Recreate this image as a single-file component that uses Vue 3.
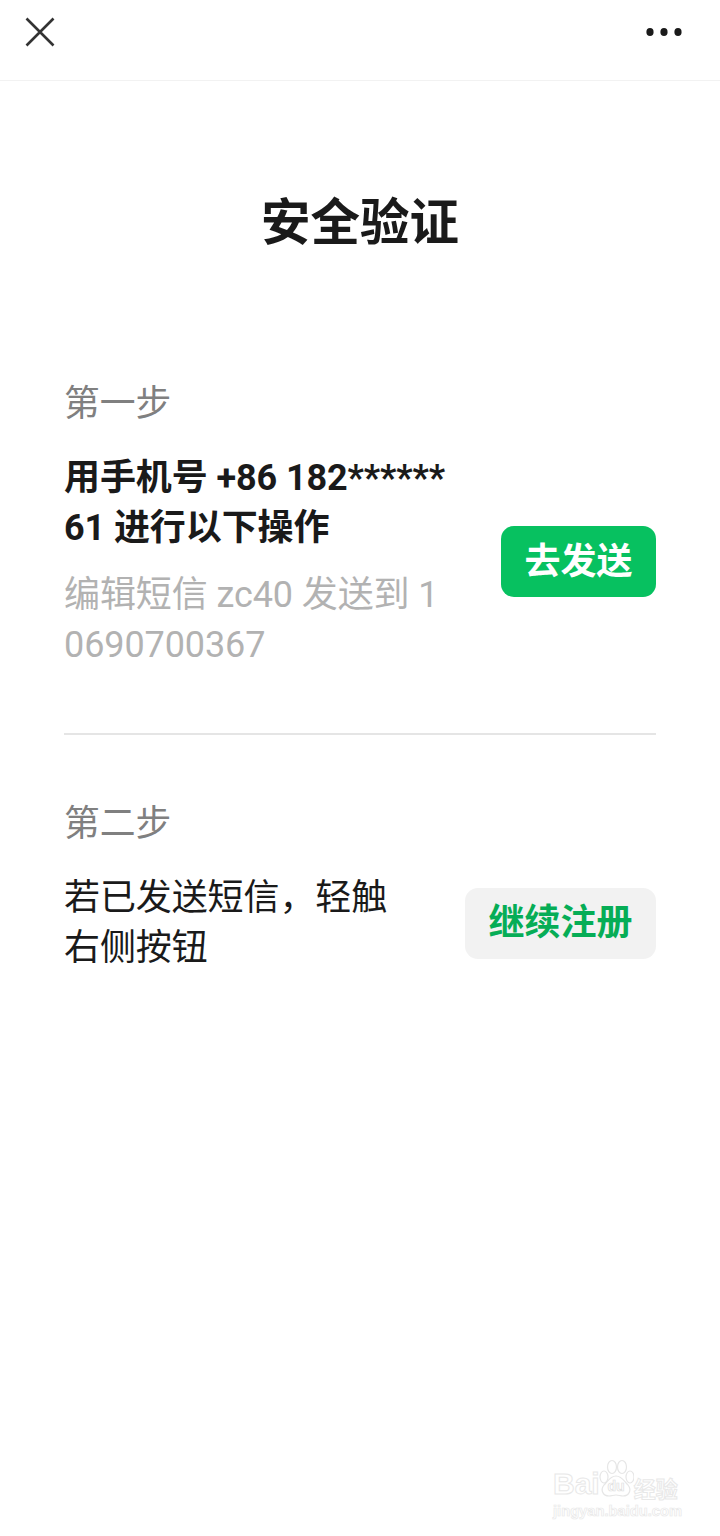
<script setup>
const steps = [
  { label: '第一步', title: '用手机号 +86 182******61 进行以下操作', strong: true, desc: '编辑短信 zc40 发送到 10690700367', action: '去发送', primary: true },
  { label: '第二步', title: '若已发送短信\uFF0C轻触右侧按钮', strong: false, desc: '', action: '继续注册', primary: false },
]
</script>

<template>
  <div class="page">
    <header class="nav">
      <svg class="close" width="30" height="30" viewBox="0 0 30 30" aria-label="关闭">
        <path d="M1.5 1.5 28.5 28.5M28.5 1.5 1.5 28.5" stroke="#333" stroke-width="2.6" fill="none" />
      </svg>
      <svg class="more" width="36" height="10" viewBox="0 0 36 10" aria-label="更多">
        <ellipse cx="4" cy="5" rx="3.6" ry="4" fill="#1a1a1a" />
        <ellipse cx="18" cy="5" rx="3.6" ry="4" fill="#1a1a1a" />
        <ellipse cx="32" cy="5" rx="3.6" ry="4" fill="#1a1a1a" />
      </svg>
    </header>
    <main class="content">
      <h1 class="title">安全验证</h1>
      <section v-for="(s, i) in steps" :key="s.label" class="step" :class="{ last: i === steps.length - 1 }">
        <div class="label">{{ s.label }}</div>
        <div class="row">
          <div class="text">
            <div class="main" :class="{ strong: s.strong }">{{ s.title }}</div>
            <div v-if="s.desc" class="desc">{{ s.desc }}</div>
          </div>
          <button class="btn" :class="s.primary ? 'primary' : 'secondary'">{{ s.action }}</button>
        </div>
      </section>
    </main>
    <div class="watermark">
      <div class="wm-top">
        <span class="wm-brand">Bai</span>
        <svg class="paw" width="36" height="46" viewBox="0 0 36 46">
          <g fill="#fff" stroke="#e6e6e6" stroke-width="1.2">
            <ellipse cx="6" cy="19" rx="4" ry="6" />
            <ellipse cx="14" cy="9" rx="4.5" ry="6.5" />
            <ellipse cx="24" cy="9" rx="4.5" ry="6.5" />
            <ellipse cx="32" cy="19" rx="4" ry="6" />
            <path d="M18 18c6 0 8 5 12 9 4 5 1 11-5 11-3 0-4-1-7-1s-4 1-7 1c-6 0-9-6-5-11 4-4 6-9 12-9z" />
          </g>
          <text x="18" y="33" text-anchor="middle" class="paw-text">du</text>
        </svg>
        <span class="wm-cn">经验</span>
      </div>
      <div class="wm-url">jingyan.baidu.com</div>
    </div>
  </div>
</template>

<style scoped>
.page {
  position: relative;
  width: 720px;
  height: 1536px;
  background: #fff;
  overflow: hidden;
  font-family: Roboto, "Noto Sans CJK SC", sans-serif;
  color: #1a1a1a;
}
.nav {
  height: 81px;
  box-sizing: border-box;
  border-bottom: 1px solid #f2f2f2;
  padding: 0 38px 0 25px;
  display: flex;
  align-items: center;
  justify-content: space-between;
}
.close { margin-top: -16px; }
.more { margin-top: -17px; }
.content {
  padding: 0 64px;
  display: flex;
  flex-direction: column;
}
.title {
  margin: 106px 0 0;
  text-align: center;
  font-size: 49.5px;
  line-height: 72px;
  font-weight: 700;
}
.step { padding: 0 0 63px; border-bottom: 2px solid #e5e5e5; }
.step.last { border-bottom: 0; padding: 0; margin-top: 64px; }
.step:first-of-type { margin-top: 120px; }
.label {
  font-size: 35.8px;
  line-height: 50px;
  color: #808080;
}
.row {
  display: flex;
  align-items: center;
  gap: 48px;
  margin-top: 24px;
}
.text { flex: 1; min-width: 0; }
.main {
  font-size: 36px;
  line-height: 50px;
  letter-spacing: -0.1px;
  word-break: break-all;
}
.main.strong { font-weight: 700; }
.desc {
  margin-top: 17px;
  font-size: 36px;
  line-height: 50px;
  letter-spacing: -0.1px;
  color: #b2b2b2;
  word-break: break-all;
}
.btn {
  flex: none;
  height: 71px;
  border: 0;
  border-radius: 13px;
  padding: 0 23.5px;
  font: 700 36px/1 Roboto, "Noto Sans CJK SC", sans-serif;
}
.primary { background: #07c160; color: #fff; }
.secondary { background: #f2f2f2; color: #06ad56; }
.watermark {
  position: absolute;
  left: 553px;
  top: 1456px;
  width: 132px;
  color: transparent;
}
.wm-top { display: flex; align-items: flex-end; height: 46px; }
.wm-brand {
  font: 700 30px/36px "Liberation Sans", sans-serif;
  -webkit-text-stroke: 1px #e8e8e8;
  margin-right: -2px;
}
.paw { flex: none; margin-bottom: -2px; }
.paw-text {
  font: 700 14px "Liberation Sans", sans-serif;
  fill: #fff;
  stroke: #e0e0e0;
  stroke-width: 0.7;
}
.wm-cn {
  font: 700 22px/30px "Noto Sans CJK SC", sans-serif;
  -webkit-text-stroke: 1px #e8e8e8;
  white-space: nowrap;
}
.wm-url {
  font: 700 14.7px/18px "Liberation Sans", sans-serif;
  -webkit-text-stroke: 0.7px #e8e8e8;
  white-space: nowrap;
}
</style>
